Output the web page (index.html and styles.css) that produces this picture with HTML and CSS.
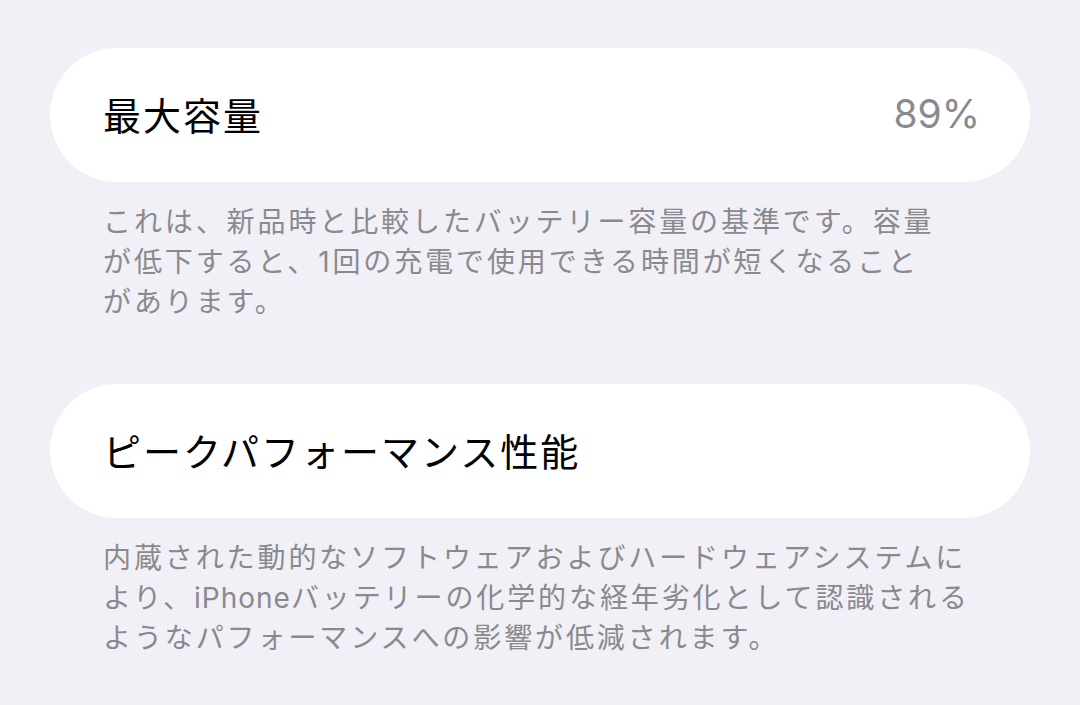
FILE: index.html
```html
<!DOCTYPE html>
<html lang="ja">
<head>
    <meta charset="UTF-8">
    <meta name="viewport" content="width=device-width, initial-scale=1.0">
    <title>バッテリーの状態</title>
    <link rel="stylesheet" href="styles.css">
</head>
<body>
    <div class="screen">
        <div class="row">
            <span class="row-title">最大容量</span>
            <span class="row-value">89%</span>
        </div>
        <p class="note">これは、新品時と比較したバッテリー容量の基準です。容量<br>が低下すると、1回の充電で使用できる時間が短くなること<br>があります。</p>

        <div class="row">
            <span class="row-title">ピークパフォーマンス性能</span>
        </div>
        <p class="note">内蔵された動的なソフトウェアおよびハードウェアシステムに<br>より、<span class="latin">iPhone</span>バッテリーの化学的な経年劣化として認識される<br>ようなパフォーマンスへの影響が低減されます。</p>
    </div>
    <div class="bottom-edge"></div>
</body>
</html>
```

FILE: styles.css
```css
html, body {
    margin: 0;
    height: 100%;
}
body {
    background-color: #f1f0f6;
    font-family: Inter, "Noto Sans CJK JP", sans-serif;
    display: flex;
    flex-direction: column;
    overflow: hidden;
}
.screen {
    flex: 1;
    padding: 48px 50px 0 50px;
}
.row {
    background-color: #ffffff;
    height: 134px;
    border-radius: 67px;
    padding: 0 50px 4px 53px;
    display: flex;
    align-items: center;
    justify-content: space-between;
    box-sizing: border-box;
}
.row-title {
    font-size: 38px;
    color: #000000;
    letter-spacing: 2px;
}
.row-value {
    font-size: 39px;
    color: #8a8a8e;
}
.note {
    margin: 20px 0 62px 0;
    padding: 0 53px;
    font-size: 28px;
    line-height: 40px;
    letter-spacing: 2.9px;
    color: #8a8a8e;
    white-space: nowrap;
}
.note .latin {
    letter-spacing: 1px;
}
.bottom-edge {
    height: 2px;
    background-color: #000000;
}
```
